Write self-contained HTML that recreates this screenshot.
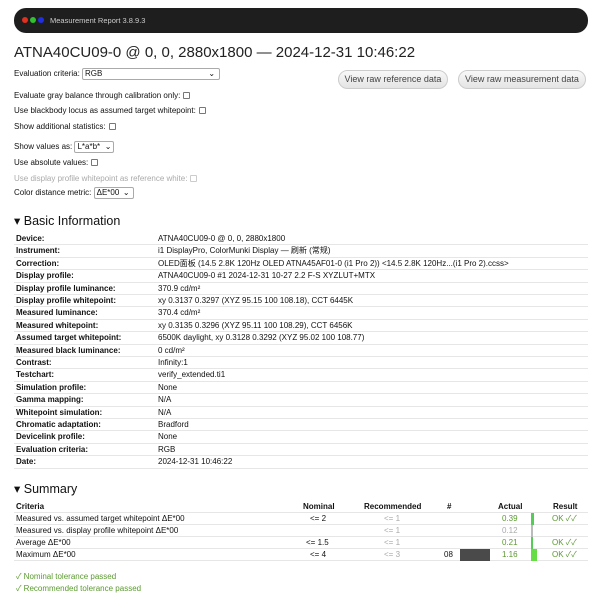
<!DOCTYPE html>
<html><head><meta charset="utf-8"><style>
*{margin:0;padding:0;box-sizing:border-box}
body{width:600px;height:598px;background:#fff;font-family:"Liberation Sans","Noto Sans CJK SC",sans-serif;color:#111;position:relative;overflow:hidden;font-size:8px}
.a{position:absolute;white-space:nowrap}
.bar{left:14px;top:8px;width:574px;height:25px;background:#1e1e1e;border-radius:12px}
.dot{position:absolute;top:17px;width:6px;height:6px;border-radius:50%}
.cb{display:inline-block;width:7px;height:7px;border:1px solid #777;border-radius:1px;vertical-align:-1px;margin-left:3px;background:#fff}
.sel{display:inline-block;border:1px solid #aaa;border-radius:2px;height:12px;line-height:10px;padding:0 2px;vertical-align:middle;position:relative}
.btn{position:absolute;top:70px;height:19px;border:1px solid #ccc;border-radius:10px;background:linear-gradient(#f8f8f8,#e4e4e4);font-size:9px;color:#444;text-align:center;line-height:17px}
.row{position:absolute;left:14px;width:574px;height:12.4px;border-bottom:1px solid #e6e6e6;line-height:11px}
.row b{position:absolute;left:2px;font-weight:bold}
.row span{position:absolute;left:144px}
.h{font-size:12.5px;color:#111}
.s{position:absolute;left:14px;width:574px;height:12px;border-bottom:1px solid #e6e6e6;line-height:11px}
.s i{font-style:normal;position:absolute}
.g{color:#5a9a2e}.l{color:#aaa}
</style></head><body>
<div class="a bar"></div>
<div class="dot" style="left:22px;background:#e03020"></div>
<div class="dot" style="left:30px;background:#30c030"></div>
<div class="dot" style="left:38px;background:#2030e0"></div>
<div class="a" style="left:50px;top:16px;color:#ccc;font-size:7.5px">Measurement Report 3.8.9.3</div>
<div class="a" style="left:14px;top:44px;font-size:15px;color:#222">ATNA40CU09-0 @ 0, 0, 2880x1800 — 2024-12-31 10:46:22</div>
<div class="a" style="left:14px;top:68px">Evaluation criteria: <span class="sel" style="width:138px">RGB<span style="position:absolute;right:4px">⌄</span></span></div>
<div class="btn" style="left:338px;width:110px">View raw reference data</div>
<div class="btn" style="left:458px;width:128px">View raw measurement data</div>
<div class="a" style="left:14px;top:91px">Evaluate gray balance through calibration only:<span class="cb"></span></div>
<div class="a" style="left:14px;top:106px">Use blackbody locus as assumed target whitepoint:<span class="cb"></span></div>
<div class="a" style="left:14px;top:122px">Show additional statistics:<span class="cb"></span></div>
<div class="a" style="left:14px;top:141px">Show values as: <span class="sel" style="width:40px">L*a*b*<span style="position:absolute;right:2px">⌄</span></span></div>
<div class="a" style="left:14px;top:158px">Use absolute values:<span class="cb"></span></div>
<div class="a" style="left:14px;top:174px;color:#aaa">Use display profile whitepoint as reference white:<span class="cb" style="border-color:#ccc"></span></div>
<div class="a" style="left:14px;top:187px">Color distance metric: <span class="sel" style="width:40px">ΔE*00<span style="position:absolute;right:3px">⌄</span></span></div>
<div class="a h" style="left:14px;top:213px">▾ Basic Information</div>
<div class="row" style="top:233px"><b>Device:</b><span>ATNA40CU09-0 @ 0, 0, 2880x1800</span></div>
<div class="row" style="top:245.4px"><b>Instrument:</b><span>i1 DisplayPro, ColorMunki Display — 刷新 (常规)</span></div>
<div class="row" style="top:257.8px"><b>Correction:</b><span>OLED面板 (14.5 2.8K 120Hz OLED ATNA45AF01-0 (i1 Pro 2)) &lt;14.5 2.8K 120Hz...(i1 Pro 2).ccss&gt;</span></div>
<div class="row" style="top:270.2px"><b>Display profile:</b><span>ATNA40CU09-0 #1 2024-12-31 10-27 2.2 F-S XYZLUT+MTX</span></div>
<div class="row" style="top:282.6px"><b>Display profile luminance:</b><span>370.9 cd/m²</span></div>
<div class="row" style="top:295px"><b>Display profile whitepoint:</b><span>xy 0.3137 0.3297 (XYZ 95.15 100 108.18), CCT 6445K</span></div>
<div class="row" style="top:307.4px"><b>Measured luminance:</b><span>370.4 cd/m²</span></div>
<div class="row" style="top:319.8px"><b>Measured whitepoint:</b><span>xy 0.3135 0.3296 (XYZ 95.11 100 108.29), CCT 6456K</span></div>
<div class="row" style="top:332.2px"><b>Assumed target whitepoint:</b><span>6500K daylight, xy 0.3128 0.3292 (XYZ 95.02 100 108.77)</span></div>
<div class="row" style="top:344.6px"><b>Measured black luminance:</b><span>0 cd/m²</span></div>
<div class="row" style="top:357px"><b>Contrast:</b><span>Infinity:1</span></div>
<div class="row" style="top:369.4px"><b>Testchart:</b><span>verify_extended.ti1</span></div>
<div class="row" style="top:381.8px"><b>Simulation profile:</b><span>None</span></div>
<div class="row" style="top:394.2px"><b>Gamma mapping:</b><span>N/A</span></div>
<div class="row" style="top:406.6px"><b>Whitepoint simulation:</b><span>N/A</span></div>
<div class="row" style="top:419px"><b>Chromatic adaptation:</b><span>Bradford</span></div>
<div class="row" style="top:431.4px"><b>Devicelink profile:</b><span>None</span></div>
<div class="row" style="top:443.8px"><b>Evaluation criteria:</b><span>RGB</span></div>
<div class="row" style="top:456.2px"><b>Date:</b><span>2024-12-31 10:46:22</span></div>
<div class="a h" style="left:14px;top:481px">▾ Summary</div>
<div class="s" style="top:501px;font-weight:bold"><i style="left:2px">Criteria</i><i style="left:289px">Nominal</i><i style="left:350px">Recommended</i><i style="left:433px">#</i><i style="left:484px">Actual</i><i style="left:539px">Result</i></div>
<div class="s" style="top:513px"><i style="left:2px">Measured vs. assumed target whitepoint ΔE*00</i><i style="left:296px">&lt;= 2</i><i class="l" style="left:370px">&lt;= 1</i><i class="g" style="left:488px">0.39</i><i style="left:517px;top:0;width:3px;height:12px;background:#5c5"></i><i class="g" style="left:538px">OK ✓✓</i></div>
<div class="s" style="top:525px"><i style="left:2px">Measured vs. display profile whitepoint ΔE*00</i><i class="l" style="left:370px">&lt;= 1</i><i class="l" style="left:488px">0.12</i><i style="left:517px;top:0;width:2px;height:12px;background:#bbb"></i></div>
<div class="s" style="top:537px"><i style="left:2px">Average ΔE*00</i><i style="left:292px">&lt;= 1.5</i><i class="l" style="left:370px">&lt;= 1</i><i class="g" style="left:488px">0.21</i><i style="left:517px;top:0;width:2px;height:12px;background:#5c5"></i><i class="g" style="left:538px">OK ✓✓</i></div>
<div class="s" style="top:549px"><i style="left:2px">Maximum ΔE*00</i><i style="left:296px">&lt;= 4</i><i class="l" style="left:370px">&lt;= 3</i><i style="left:430px">08</i><i style="left:446px;top:0;width:30px;height:12px;background:#4a4a4a"></i><i class="g" style="left:488px">1.16</i><i style="left:517px;top:0;width:6px;height:12px;background:#6d4"></i><i class="g" style="left:538px">OK ✓✓</i></div>
<div class="a g" style="left:16px;top:571px">✓ Nominal tolerance passed</div>
<div class="a g" style="left:16px;top:583px">✓ Recommended tolerance passed</div>
</body></html>
